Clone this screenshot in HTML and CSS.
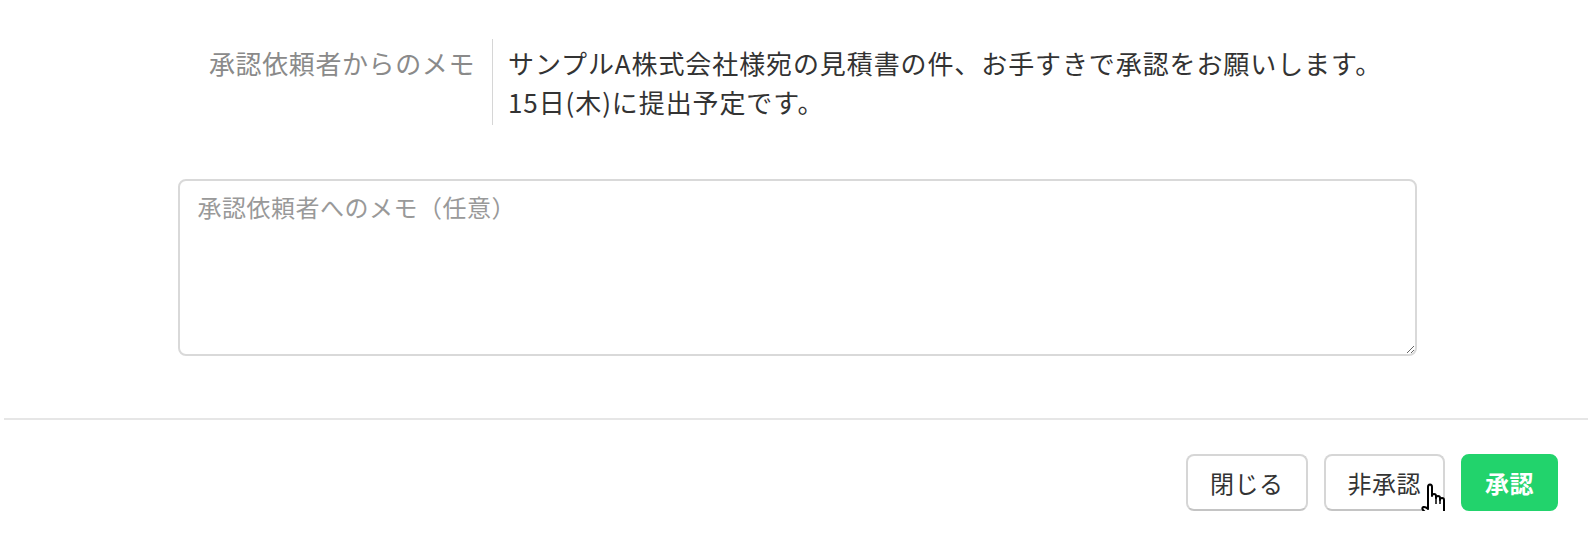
FILE: index.html
```html
<!DOCTYPE html>
<html lang="ja">
<head>
    <meta charset="UTF-8">
    <meta name="viewport" content="width=device-width, initial-scale=1.0">
    <title>承認</title>
    <link rel="stylesheet" href="styles.css">
</head>
<body>
    <div class="modal-body">
        <dl class="memo">
            <dt class="memo-label">承認依頼者からのメモ</dt>
            <dd class="memo-text">サンプルA株式会社様宛の見積書の件、お手すきで承認をお願いします。<br>15日(木)に提出予定です。</dd>
        </dl>
        <textarea class="reply" placeholder="承認依頼者へのメモ（任意）"></textarea>
    </div>

    <div class="modal-footer">
        <button class="btn">閉じる</button>
        <button class="btn">非承認</button>
        <button class="btn btn-approve">承認</button>
        <!-- mouse pointer hovering 非承認 -->
        <svg class="cursor" width="30" height="40" viewBox="0 0 30 40">
            <path d="M9 4 Q9 1.5 11 1.5 Q13 1.5 13 4 L13 13 Q13 11 15 11 Q17 11 17 13 L17 15 Q17 13 19 13 Q21 13 21 15 L21 17 Q21 15 23 15 Q25 15 25 17 L25 28 L23 33 L23 38 L11 38 L11 34 L4 27 Q2.5 25 4.5 24 Q6.5 23.5 9 26 Z" fill="#fff" stroke="#000" stroke-width="2" stroke-linejoin="round"/>
            <path d="M17 15 L17 21 M21 17 L21 21" stroke="#000" stroke-width="1.5"/>
        </svg>
    </div>
</body>
</html>
```

FILE: styles.css
```css
body {
    margin: 0;
    background-color: #fff;
    font-family: "Noto Sans CJK JP", "Noto Sans", sans-serif;
    color: #333;
}
.modal-body {
    padding-top: 39px;
}
.memo {
    display: flex;
    margin: 0;
    font-size: 26px;
    line-height: 39px;
}
.memo-label {
    width: 492px;
    box-sizing: border-box;
    padding: 4px 17px 0 0;
    text-align: right;
    letter-spacing: 0.6px;
    color: #8a8a8a;
}
.memo-text {
    margin: 0;
    padding: 4px 0 4px 15px;
    border-left: 1px solid #d6d6d6;
    letter-spacing: 0.9px;
    color: #333;
}
.reply {
    display: block;
    box-sizing: border-box;
    width: 1239px;
    height: 177px;
    margin: 54px auto 0;
    padding: 8px 18px;
    border: 2px solid #d9d9d9;
    border-radius: 8px;
    font-family: inherit;
    font-size: 24px;
    line-height: 1.5;
    letter-spacing: 0.5px;
    color: #333;
    outline: none;
}
.reply::placeholder {
    color: #999;
}
.modal-footer {
    position: relative;
    display: flex;
    justify-content: flex-end;
    gap: 16px;
    margin: 62px 6px 0 4px;
    padding: 34px 30px 0 0;
    border-top: 2px solid #e6e6e6;
}
.btn {
    height: 57px;
    padding: 0 22px;
    border: 2px solid #d6d6d6;
    border-bottom-color: #c4c4c4;
    border-radius: 8px;
    background-color: #fff;
    font-family: inherit;
    font-size: 24px;
    letter-spacing: 0.5px;
    color: #333;
    cursor: pointer;
}
.btn-approve {
    border-color: #22d36c;
    background-color: #22d36c;
    color: #fff;
    font-weight: bold;
}
.cursor {
    position: absolute;
    right: 139px;
    top: 63px;
}
```
